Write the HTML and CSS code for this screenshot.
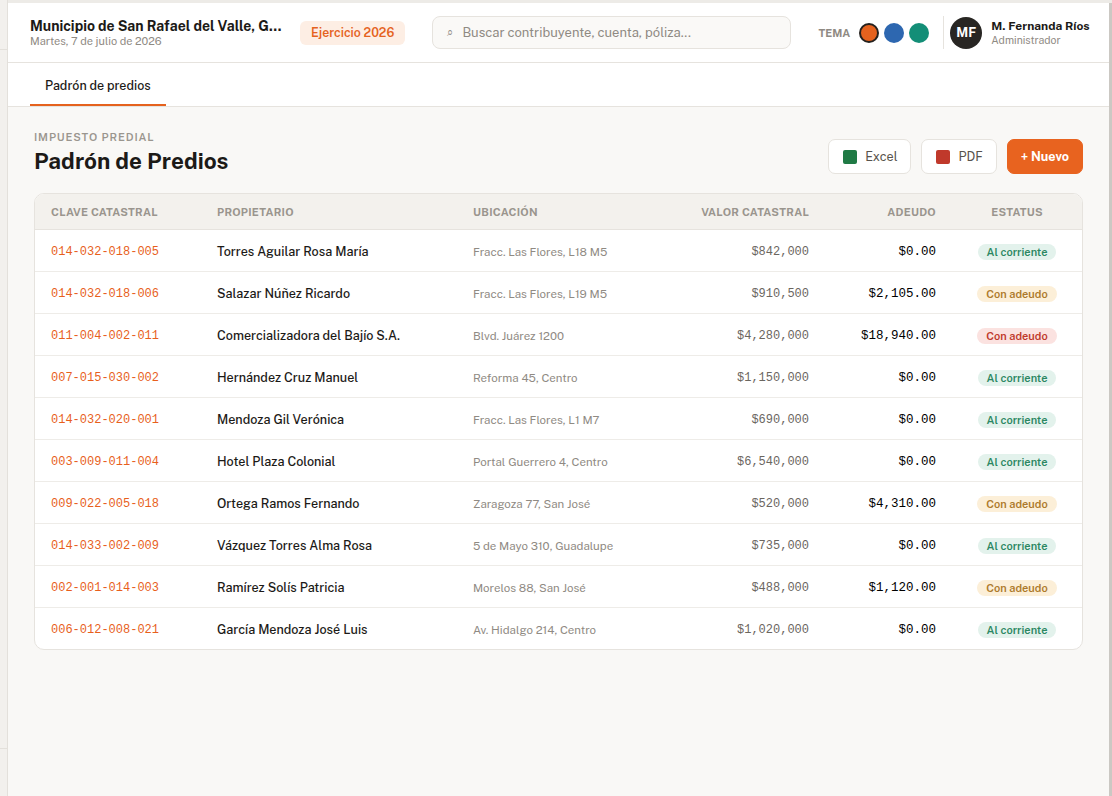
FILE: index.html
```html
<!DOCTYPE html>
<html lang="es">

<head>
    <meta charset="UTF-8">
    <meta name="viewport" content="width=device-width, initial-scale=1.0">
    <title>Padrón de Predios</title>
    <link rel="stylesheet" href="styles.css">
</head>

<body>
    <div class="rail">
        <div class="rail-top"></div>
        <div class="rail-mid"></div>
        <div class="rail-bottom"></div>
    </div>

    <div class="app">
        <header class="topbar">
            <div class="brand">
                <p class="brand-name">Municipio de San Rafael del Valle, Guanajuato</p>
                <p class="brand-date">Martes, 7 de julio de 2026</p>
            </div>
            <span class="year-pill">Ejercicio 2026</span>
            <div class="search">
                <span class="search-icon">&#x2315;</span>
                <span class="search-text">Buscar contribuyente, cuenta, póliza...</span>
            </div>
            <div class="theme">
                <span class="theme-label">TEMA</span>
                <span class="swatch swatch-orange active"></span>
                <span class="swatch swatch-blue"></span>
                <span class="swatch swatch-green"></span>
            </div>
            <div class="user">
                <div class="avatar">MF</div>
                <div>
                    <p class="user-name">M. Fernanda Ríos</p>
                    <p class="user-role">Administrador</p>
                </div>
            </div>
        </header>

        <nav class="tabs">
            <span class="tab active">Padrón de predios</span>
        </nav>

        <section class="content">
            <div class="page-head">
                <div>
                    <p class="eyebrow">IMPUESTO PREDIAL</p>
                    <h1 class="page-title">Padrón de Predios</h1>
                </div>
                <div class="actions">
                    <button class="btn"><span class="sq sq-green"></span>Excel</button>
                    <button class="btn"><span class="sq sq-red"></span>PDF</button>
                    <button class="btn btn-primary">+ Nuevo</button>
                </div>
            </div>

            <div class="card">
                <table class="grid">
                    <colgroup>
                        <col style="width:166px">
                        <col style="width:256px">
                        <col style="width:220px">
                        <col style="width:148px">
                        <col style="width:127px">
                        <col>
                    </colgroup>
                    <thead>
                        <tr>
                            <th>CLAVE CATASTRAL</th>
                            <th>PROPIETARIO</th>
                            <th>UBICACIÓN</th>
                            <th class="num">VALOR CATASTRAL</th>
                            <th class="num">ADEUDO</th>
                            <th class="mid">ESTATUS</th>
                        </tr>
                    </thead>
                    <tbody id="rows"></tbody>
                </table>
            </div>
        </section>
    </div>

    <script>
        var predios = [
            ["014-032-018-005", "Torres Aguilar Rosa María", "Fracc. Las Flores, L18 M5", "$842,000", "$0.00", "ok"],
            ["014-032-018-006", "Salazar Núñez Ricardo", "Fracc. Las Flores, L19 M5", "$910,500", "$2,105.00", "due"],
            ["011-004-002-011", "Comercializadora del Bajío S.A.", "Blvd. Juárez 1200", "$4,280,000", "$18,940.00", "late"],
            ["007-015-030-002", "Hernández Cruz Manuel", "Reforma 45, Centro", "$1,150,000", "$0.00", "ok"],
            ["014-032-020-001", "Mendoza Gil Verónica", "Fracc. Las Flores, L1 M7", "$690,000", "$0.00", "ok"],
            ["003-009-011-004", "Hotel Plaza Colonial", "Portal Guerrero 4, Centro", "$6,540,000", "$0.00", "ok"],
            ["009-022-005-018", "Ortega Ramos Fernando", "Zaragoza 77, San José", "$520,000", "$4,310.00", "due"],
            ["014-033-002-009", "Vázquez Torres Alma Rosa", "5 de Mayo 310, Guadalupe", "$735,000", "$0.00", "ok"],
            ["002-001-014-003", "Ramírez Solís Patricia", "Morelos 88, San José", "$488,000", "$1,120.00", "due"],
            ["006-012-008-021", "García Mendoza José Luis", "Av. Hidalgo 214, Centro", "$1,020,000", "$0.00", "ok"]
        ]
        var labels = { ok: "Al corriente", due: "Con adeudo", late: "Con adeudo" }
        var html = ""
        predios.forEach(p => {
            html += `<tr>
                <td class="clave">${p[0]}</td>
                <td class="owner">${p[1]}</td>
                <td class="place">${p[2]}</td>
                <td class="num value">${p[3]}</td>
                <td class="num debt">${p[4]}</td>
                <td class="mid"><span class="badge badge-${p[5]}">${labels[p[5]]}</span></td>
            </tr>`
        })
        document.getElementById("rows").innerHTML = html
    </script>
</body>

</html>
```

FILE: styles.css
```css
body {
    margin: 0;
    padding: 3px 0 0 0;
    height: 796px;
    box-sizing: border-box;
    display: flex;
    background-color: #edebe7;
    font-family: "Public Sans", Inter, "Noto Sans", sans-serif;
    color: #1c1a17;
    overflow: hidden;
}

p {
    margin: 0;
}

.rail {
    width: 7px;
    flex-shrink: 0;
    margin-top: -3px;
    display: flex;
    flex-direction: column;
    background-color: #f2f0ed;
    border-right: 1px solid #e3e0db;
}

.rail-top {
    height: 49px;
    border-bottom: 1px solid #e3e0db;
}

.rail-mid {
    flex: 1;
}

.rail-bottom {
    height: 47px;
    border-top: 1px solid #e3e0db;
}

.app {
    flex: 1;
    min-width: 0;
    overflow: hidden;
    display: flex;
    flex-direction: column;
    background-color: #f9f8f6;
    border-right: 3px solid #cbc8c3;
}

/* top bar */
.topbar {
    height: 60px;
    flex-shrink: 0;
    box-sizing: border-box;
    display: flex;
    align-items: center;
    padding: 0 21px 0 22px;
    background-color: #fff;
    border-bottom: 1px solid #e6e3de;
}

.brand {
    width: 252px;
    flex-shrink: 0;
}

.brand-name {
    font-size: 14px;
    font-weight: 700;
    white-space: nowrap;
    overflow: hidden;
    text-overflow: ellipsis;
    line-height: 17px;
}

.brand-date {
    font-size: 11px;
    color: #8f8a83;
    line-height: 13px;
}

.year-pill {
    flex-shrink: 0;
    white-space: nowrap;
    margin-left: 18px;
    padding: 0 11px;
    height: 24px;
    line-height: 24px;
    border-radius: 6px;
    background-color: #fdeee4;
    color: #e5621e;
    font-size: 12.3px;
    font-weight: 600;
}

.search {
    flex-shrink: 0;
    margin-left: 27px;
    width: 359px;
    height: 33px;
    box-sizing: border-box;
    display: flex;
    align-items: center;
    padding-left: 14px;
    background-color: #faf9f7;
    border: 1px solid #e6e3de;
    border-radius: 8px;
}

.search-icon {
    font-size: 11px;
    color: #8f8a83;
    margin-right: 9px;
}

.search-text {
    font-size: 13px;
    color: #8f8a83;
    white-space: nowrap;
}

.theme {
    flex-shrink: 0;
    display: flex;
    align-items: center;
    gap: 5px;
    margin-left: 27px;
    padding-right: 14px;
    border-right: 1px solid #e6e3de;
    height: 33px;
}

.theme-label {
    font-size: 11px;
    font-weight: 700;
    color: #8f8a83;
    margin-right: 4px;
}

.swatch {
    width: 20px;
    height: 20px;
    border-radius: 50%;
    box-sizing: border-box;
}

.swatch-orange {
    background-color: #e5621e;
}

.swatch-blue {
    background-color: #2d67b0;
}

.swatch-green {
    background-color: #138e77;
}

.swatch.active {
    border: 2px solid #24211e;
}

.user {
    flex-shrink: 0;
    display: flex;
    align-items: center;
    gap: 9px;
    margin-left: 6px;
    white-space: nowrap;
}

.avatar {
    width: 32px;
    height: 32px;
    border-radius: 50%;
    background-color: #282623;
    color: #fff;
    font-size: 13px;
    font-weight: 700;
    display: flex;
    align-items: center;
    justify-content: center;
}

.user-name {
    font-size: 12px;
    font-weight: 700;
    line-height: 16px;
}

.user-role {
    font-size: 10.5px;
    color: #8f8a83;
    line-height: 13px;
}

/* tabs */
.tabs {
    height: 44px;
    flex-shrink: 0;
    box-sizing: border-box;
    display: flex;
    padding-left: 22px;
    background-color: #fff;
    border-bottom: 1px solid #e6e3de;
}

.tab {
    padding: 3px 15px 0 15px;
    display: flex;
    align-items: center;
    font-size: 12.5px;
    font-weight: 500;
    border-bottom: 2px solid transparent;
}

.tab.active {
    border-bottom-color: #e5621e;
}

/* content */
.content {
    padding: 24px 26px 0 26px;
}

.page-head {
    display: flex;
    justify-content: space-between;
    align-items: flex-end;
    margin-bottom: 18px;
}

.eyebrow {
    font-size: 11px;
    font-weight: 600;
    letter-spacing: 0.85px;
    color: #9a958e;
    line-height: 13px;
}

.page-title {
    margin: 3px 0 0 0;
    font-size: 22.5px;
    font-weight: 700;
    line-height: 28px;
}

.actions {
    display: flex;
    gap: 10px;
    margin-bottom: 1px;
}

.btn {
    height: 35px;
    padding: 0 13px 0 14px;
    display: flex;
    align-items: center;
    gap: 8px;
    background-color: #fff;
    border: 1px solid #e6e3de;
    border-radius: 7px;
    font-family: inherit;
    font-size: 12.6px;
    color: #57524c;
}

.btn-primary {
    padding: 0 13px;
    background-color: #e8631f;
    border-color: #e8631f;
    color: #fff;
    font-weight: 700;
}

.sq {
    width: 14px;
    height: 14px;
    border-radius: 2px;
}

.sq-green {
    background-color: #1f7a45;
}

.sq-red {
    background-color: #c0392b;
}

.card {
    background-color: #fff;
    border: 1px solid #e6e3de;
    border-radius: 10px;
    overflow: hidden;
}

.grid {
    width: 100%;
    border-collapse: collapse;
    table-layout: fixed;
}

.grid th {
    height: 35px;
    padding: 0 16px;
    text-align: left;
    font-size: 11px;
    font-weight: 700;
    letter-spacing: 0.25px;
    color: #9a958e;
    background-color: #f3f1ed;
    border-bottom: 1px solid #e6e3de;
}

.grid td {
    height: 39px;
    padding: 2px 16px 0 16px;
    border-bottom: 1px solid #eeece8;
    font-size: 13px;
}

.grid tr:last-child td {
    border-bottom: none;
}

.grid .num {
    text-align: right;
}

.grid .mid {
    text-align: center;
    padding-left: 0;
    padding-right: 0;
}

.clave {
    font-family: "Liberation Mono", monospace;
    font-size: 12px !important;
    color: #e85f1c;
}

.owner {
    font-size: 12.6px !important;
    font-weight: 500;
    color: #1c1a17;
}

.place {
    font-size: 11.5px !important;
    color: #8f8a83;
}

.value {
    font-family: "Liberation Mono", monospace;
    font-size: 12px !important;
    color: #6b665f;
}

.debt {
    font-family: "Liberation Mono", monospace;
    font-size: 12.5px !important;
    color: #000;
}

.badge {
    display: inline-block;
    padding: 0 9px;
    height: 16px;
    line-height: 16px;
    border-radius: 8px;
    font-size: 11px;
    font-weight: 600;
}

.badge-ok {
    background-color: #e3f2ec;
    color: #2b8762;
}

.badge-due {
    background-color: #fcefd8;
    color: #ad7a2b;
}

.badge-late {
    background-color: #fbe2e0;
    color: #c0392b;
}
```
